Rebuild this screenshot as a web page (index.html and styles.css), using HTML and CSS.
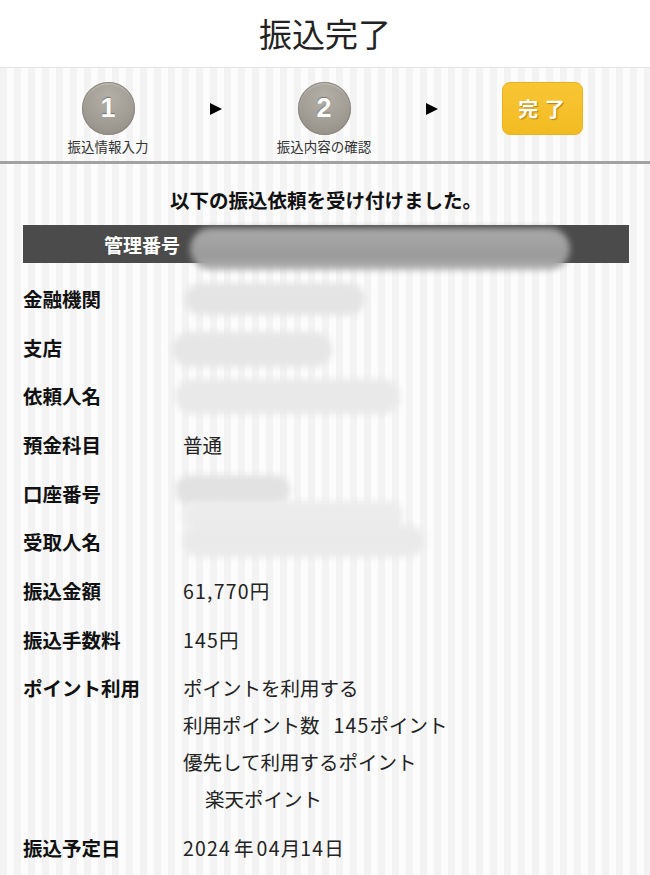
FILE: index.html
```html
<!DOCTYPE html>
<html lang="ja">
<head>
<meta charset="utf-8">
<title>振込完了</title>
<link rel="stylesheet" href="styles.css">
</head>
<body>
<header class="header">
  <h1 class="title">振込完了</h1>
</header>
<nav class="steps">
  <div class="step">
    <div class="circle">1</div>
    <div class="step-label">振込情報入力</div>
  </div>
  <div class="arrow-col"><span class="arrow"></span></div>
  <div class="step">
    <div class="circle">2</div>
    <div class="step-label">振込内容の確認</div>
  </div>
  <div class="arrow-col"><span class="arrow"></span></div>
  <div class="step">
    <div class="done">完 了</div>
  </div>
</nav>
<main class="main">
  <p class="message">以下の振込依頼を受け付けました。</p>
  <div class="bar">
    <span class="bar-label">管理番号</span>
    <span class="blob blob-id"></span>
  </div>
  <dl class="rows">
    <div class="row"><dt>金融機関</dt><dd><span class="blob blob-bank"></span></dd></div>
    <div class="row"><dt>支店</dt><dd><span class="blob blob-branch"></span></dd></div>
    <div class="row"><dt>依頼人名</dt><dd><span class="blob blob-req"></span></dd></div>
    <div class="row"><dt>預金科目</dt><dd>普通</dd></div>
    <div class="row"><dt>口座番号</dt><dd><span class="blob blob-acct"></span></dd></div>
    <div class="row"><dt>受取人名</dt><dd><span class="blob blob-recv"></span><span class="blob blob-recv2"></span></dd></div>
    <div class="row"><dt>振込金額</dt><dd><span class="num">61,770</span>円</dd></div>
    <div class="row"><dt>振込手数料</dt><dd><span class="num">145</span>円</dd></div>
    <div class="row"><dt>ポイント利用</dt><dd>
      <div>ポイントを利用する</div>
      <div>利用ポイント数<span class="gap"></span><span class="num">145</span>ポイント</div>
      <div>優先して利用するポイント</div>
      <div class="indent">楽天ポイント</div>
    </dd></div>
    <div class="row"><dt>振込予定日</dt><dd><span class="num num-sp">2024</span>年<span class="num num-lead">04</span>月<span class="num">14</span>日</dd></div>
  </dl>
</main>
</body>
</html>
```

FILE: styles.css
```css
* { box-sizing: border-box; }
html, body { margin: 0; padding: 0; }
body {
  width: 650px;
  min-height: 875px;
  font-family: "Noto Sans CJK JP", "Noto Sans", sans-serif;
  color: #222;
  background: repeating-linear-gradient(90deg, #f3f3f3 0 7px, #fcfcfc 7px 14px);
  overflow: hidden;
}
.header {
  height: 68px;
  background: #fff;
  border-bottom: 1px solid #e2e2e2;
  display: flex;
  align-items: center;
  justify-content: center;
}
.title {
  margin: 0;
  font-size: 33px;
  font-weight: 400;
  color: #222;
  line-height: 1;
}
.steps {
  height: 96px;
  border-bottom: 3px solid #a2a2a2;
  display: flex;
  padding: 14px 0 0 54px;
}
.step, .arrow-col {
  width: 108px;
  display: flex;
  flex-direction: column;
  align-items: center;
}
.arrow-col { justify-content: flex-start; padding-top: 21px; }
.arrow {
  width: 0; height: 0;
  border-top: 6px solid transparent;
  border-bottom: 6px solid transparent;
  border-left: 12px solid #000;
}
.circle {
  width: 53px; height: 53px;
  border-radius: 50%;
  background: radial-gradient(circle at 50% 30%, #b4b0a8 0%, #a19d95 55%, #8e8a82 100%);
  box-shadow: inset 0 0 0 1px #8a867e, inset 0 2px 2px rgba(255,255,255,0.35);
  color: #fff;
  font-family: "Liberation Sans", Arial, sans-serif;
  font-weight: 700;
  font-size: 27px;
  display: flex; align-items: center; justify-content: center;
  text-shadow: 0 -1px 1px rgba(0,0,0,0.35);
}
.step-label {
  margin-top: 3px;
  font-size: 13.5px;
  line-height: 17px;
  color: #333;
  white-space: nowrap;
}
.done {
  margin-left: 4px;
  width: 81px; height: 53px;
  border-radius: 8px;
  background: linear-gradient(#f8c634, #f2bb22);
  border: 1px solid #e9b11c;
  color: #fff;
  font-weight: 700;
  font-size: 20px;
  letter-spacing: 1px;
  display: flex; align-items: center; justify-content: center;
  text-shadow: 1px 1px 1px rgba(120,80,0,0.55);
}
.main { padding: 0 21px 0 23px; }
.message {
  margin: 0;
  padding-top: 22px;
  text-align: center;
  font-weight: 700;
  font-size: 19.5px;
  line-height: 28px;
  color: #111;
}
.bar {
  position: relative;
  margin-top: 11px;
  height: 38px;
  background: #4b4b4b;
  display: flex;
  align-items: center;
  padding-left: 81px;
}
.bar-label {
  color: #fff;
  font-weight: 700;
  font-size: 19px;
}
.blob {
  position: absolute;
  border-radius: 22px;
  filter: blur(3px);
}
.blob-id {
  left: 167px; top: 3px; width: 380px; height: 42px;
  background: linear-gradient(180deg, #a9a9a9, #9a9a9a 70%, #b5b5b5);
}
.rows { margin: 11px 0 0; padding: 0; }
.row {
  display: flex;
  padding: 5.85px 0;
  font-size: 19.5px;
  line-height: 37px;
}
.row dt {
  width: 160px;
  flex: none;
  font-weight: 700;
  color: #111;
}
.row dd {
  margin: 0;
  position: relative;
  flex: 1;
  min-height: 37px;
  color: #222;
}
.num { letter-spacing: 1.2px; }
.num-sp { margin-right: 3px; }
.num-lead { margin-left: 3px; }
.gap { display: inline-block; width: 14px; }
.indent { padding-left: 22px; }
.blob-bank { left: 2px; top: 3px; width: 180px; height: 32px; background: #e4e4e4; }
.blob-branch { left: -11px; top: 3px; width: 160px; height: 35px; background: #e6e6e6; }
.blob-req { left: -8px; top: 2px; width: 225px; height: 35px; background: #e9e9e9; }
.blob-acct { left: -8px; top: 0px; width: 115px; height: 30px; background: #e2e2e2; }
.blob-recv { left: 0px; top: -22px; width: 220px; height: 30px; background: #ececec; }
.blob-recv2 { left: 0px; top: 2px; width: 242px; height: 32px; background: #eaeaea; }
```
